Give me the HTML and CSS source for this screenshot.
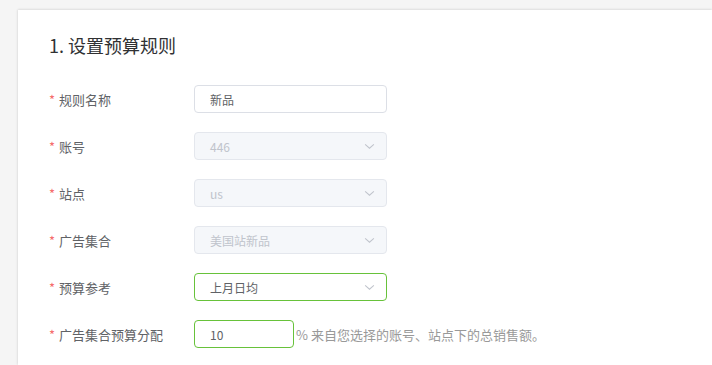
FILE: index.html
```html
<!DOCTYPE html>
<html lang="zh">
<head>
<meta charset="utf-8">
<link rel="stylesheet" href="styles.css">
</head>
<body>
<div class="card">
  <h2 class="title">1. 设置预算规则</h2>
  <div class="form">
    <div class="row">
      <label class="label"><span class="req">*</span>规则名称</label>
      <div class="field input">新品</div>
    </div>
    <div class="row">
      <label class="label"><span class="req">*</span>账号</label>
      <div class="field select disabled"><span>446</span><svg class="arrow" viewBox="0 0 12 8"><path d="M1 1.5 L6 6 L11 1.5" fill="none" stroke="currentColor" stroke-width="1.2"/></svg></div>
    </div>
    <div class="row">
      <label class="label"><span class="req">*</span>站点</label>
      <div class="field select disabled"><span>us</span><svg class="arrow" viewBox="0 0 12 8"><path d="M1 1.5 L6 6 L11 1.5" fill="none" stroke="currentColor" stroke-width="1.2"/></svg></div>
    </div>
    <div class="row">
      <label class="label"><span class="req">*</span>广告集合</label>
      <div class="field select disabled"><span>美国站新品</span><svg class="arrow" viewBox="0 0 12 8"><path d="M1 1.5 L6 6 L11 1.5" fill="none" stroke="currentColor" stroke-width="1.2"/></svg></div>
    </div>
    <div class="row">
      <label class="label"><span class="req">*</span>预算参考</label>
      <div class="field select ok"><span>上月日均</span><svg class="arrow" viewBox="0 0 12 8"><path d="M1 1.5 L6 6 L11 1.5" fill="none" stroke="currentColor" stroke-width="1.2"/></svg></div>
    </div>
    <div class="row">
      <label class="label"><span class="req">*</span>广告集合预算分配</label>
      <div class="field input ok short">10</div>
      <span class="hint">% 来自您选择的账号、站点下的总销售额。</span>
    </div>
  </div>
</div>
</body>
</html>
```
FILE: styles.css
```css
html, body {
  margin: 0;
  padding: 0;
  background: #f5f5f5;
  font-family: "Noto Sans CJK SC", "Liberation Sans", sans-serif;
  overflow: hidden;
}
body {
  padding: 10px 0 0 18px;
  height: 365px;
  box-sizing: border-box;
}
.card {
  background: #fff;
  height: 355px;
  box-shadow: 0 -1px 2px rgba(0,0,0,0.08), -1px 0 2px rgba(0,0,0,0.06);
  padding: 22px 0 0 31px;
  box-sizing: border-box;
}
.title {
  margin: 0;
  font-size: 18px;
  font-weight: 400;
  color: #303133;
  line-height: 26px;
}
.form {
  margin-top: 27px;
  display: flex;
  flex-direction: column;
  gap: 19px;
}
.row {
  display: flex;
  align-items: center;
  height: 28px;
}
.label {
  width: 145px;
  flex: none;
  font-size: 13px;
  color: #606266;
}
.req {
  color: #f56c6c;
  margin-right: 4px;
}
.field {
  box-sizing: border-box;
  width: 193px;
  height: 28px;
  border: 1px solid #dcdfe6;
  border-radius: 4px;
  padding: 0 15px;
  font-size: 12px;
  color: #606266;
  display: flex;
  align-items: center;
  justify-content: space-between;
  background: #fff;
}
.field.disabled {
  background: #f5f7fa;
  border-color: #e4e7ed;
  color: #c0c4cc;
}
.field.ok {
  border-color: #67c23a;
}
.field.short {
  width: 100px;
}
.arrow {
  width: 11px;
  height: 7px;
  color: #c0c4cc;
  margin-right: -4px;
}
.hint {
  margin-left: 2px;
  font-size: 13px;
  color: #999;
}
```
